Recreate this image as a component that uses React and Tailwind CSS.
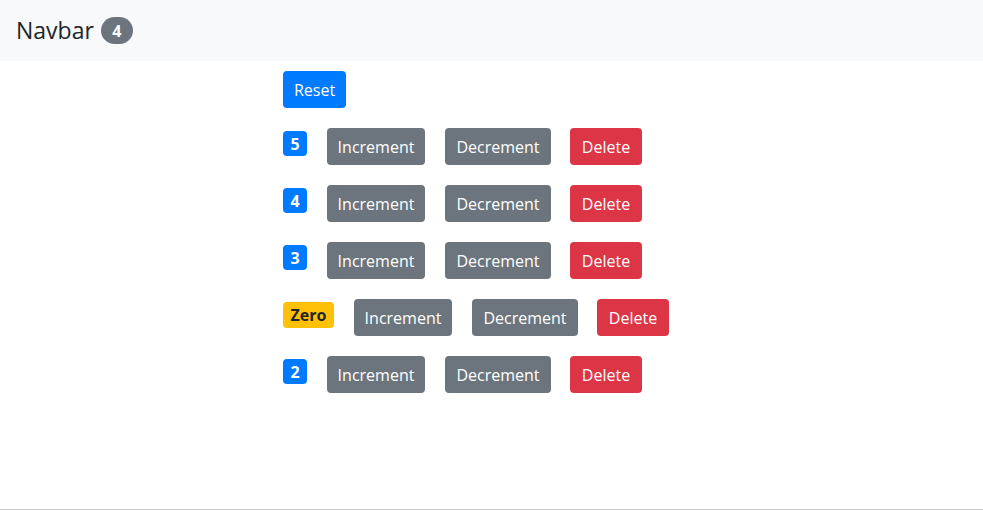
import React, { useState } from 'react';

const font = { fontFamily: '"Open Sans", "Noto Sans", "Liberation Sans", sans-serif' };

// Badge showing the counter value, or "Zero" when it is 0
const CounterBadge = ({ value }) => {
  if (value === 0) {
    return (
      <span className="mt-[3px] flex h-[26px] w-[51px] items-center justify-center rounded-[4px] bg-[#ffc107] text-[16px] font-bold leading-none text-[#212529]">
        Zero
      </span>
    );
  }
  return (
    <span className="mt-[3px] flex h-[25px] w-[24px] items-center justify-center rounded-[4px] bg-[#007bff] text-[16px] font-bold leading-none text-white">
      {value}
    </span>
  );
};

const Counter = ({ counter, onIncrement, onDecrement, onDelete }) => {
  return (
    <div className="flex items-start">
      <CounterBadge value={counter.value} />
      <button
        onClick={() => onIncrement(counter)}
        className="ml-[20px] h-[37px] w-[98px] rounded-[4px] bg-[#6c757d] text-[16px] text-white"
      >
        Increment
      </button>
      <button
        onClick={() => onDecrement(counter)}
        className="ml-[20px] h-[37px] w-[106px] rounded-[4px] bg-[#6c757d] text-[16px] text-white"
      >
        Decrement
      </button>
      <button
        onClick={() => onDelete(counter.id)}
        className="ml-[19px] h-[37px] w-[72px] rounded-[4px] bg-[#dc3545] text-[16px] text-white"
      >
        Delete
      </button>
    </div>
  );
};

export default function App() {
  const [counters, setCounters] = useState([
    { id: 1, value: 5 },
    { id: 2, value: 4 },
    { id: 3, value: 3 },
    { id: 4, value: 0 },
    { id: 5, value: 2 },
  ]);

  const handleIncrement = (c) =>
    setCounters(counters.map((x) => (x.id === c.id ? { ...x, value: x.value + 1 } : x)));
  const handleDecrement = (c) =>
    setCounters(counters.map((x) => (x.id === c.id ? { ...x, value: x.value - 1 } : x)));
  const handleDelete = (id) => setCounters(counters.filter((x) => x.id !== id));
  const handleReset = () => setCounters(counters.map((x) => ({ ...x, value: 0 })));

  const total = counters.filter((c) => c.value > 0).length;

  return (
    <div style={font} className="flex h-[510px] flex-col border-b border-[#c8c8c8] bg-white text-[#212529]">
      <nav className="flex h-[61px] shrink-0 items-center bg-[#f8f9fa] pl-[16px]">
        <span className="text-[23px] leading-none text-[#212529]">Navbar</span>
        <span className="ml-[7px] flex h-[27px] w-[32px] items-center justify-center rounded-full bg-[#6c757d] text-[16px] font-bold leading-none text-white">
          {total}
        </span>
      </nav>
      <main className="flex flex-col gap-[20px] pl-[283px] pt-[10px]">
        <div>
          <button
            onClick={handleReset}
            className="h-[37px] w-[63px] rounded-[4px] bg-[#007bff] text-[16px] text-white"
          >
            Reset
          </button>
        </div>
        {counters.map((c) => (
          <Counter
            key={c.id}
            counter={c}
            onIncrement={handleIncrement}
            onDecrement={handleDecrement}
            onDelete={handleDelete}
          />
        ))}
      </main>
    </div>
  );
}
